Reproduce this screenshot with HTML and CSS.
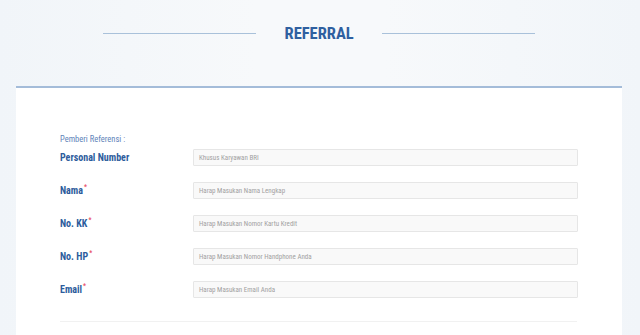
FILE: index.html
```html
<!DOCTYPE html>
<html lang="id">
<head>
<meta charset="utf-8">
<title>Referral</title>
<link rel="stylesheet" href="styles.css">
</head>
<body>
<div class="page">
  <header class="heading">
    <span class="rule"></span>
    <h1 class="title">REFERRAL</h1>
    <span class="rule"></span>
  </header>
  <section class="card">
    <p class="section-label">Pemberi Referensi :</p>
    <div class="row">
      <label class="label">Personal Number</label>
      <div class="input"><span class="ph">Khusus Karyawan BRI</span></div>
    </div>
    <div class="row">
      <label class="label">Nama<sup class="req">*</sup></label>
      <div class="input"><span class="ph">Harap Masukan Nama Lengkap</span></div>
    </div>
    <div class="row">
      <label class="label">No. KK<sup class="req">*</sup></label>
      <div class="input"><span class="ph">Harap Masukan Nomor Kartu Kredit</span></div>
    </div>
    <div class="row">
      <label class="label">No. HP<sup class="req">*</sup></label>
      <div class="input"><span class="ph">Harap Masukan Nomor Handphone Anda</span></div>
    </div>
    <div class="row">
      <label class="label">Email<sup class="req">*</sup></label>
      <div class="input"><span class="ph">Harap Masukan Email Anda</span></div>
    </div>
    <div class="divider"></div>
  </section>
</div>
</body>
</html>
```
FILE: styles.css
```css
html, body {
  margin: 0;
  padding: 0;
}
body {
  width: 640px;
  height: 335px;
  overflow: hidden;
  background: linear-gradient(90deg, #f1f5f9 0%, #f7f9fb 40%, #f7f9fb 60%, #f1f5f9 100%);
  font-family: "Roboto Condensed", "Liberation Sans Narrow", Roboto, sans-serif;
}
.page {
  display: flex;
  flex-direction: column;
  height: 335px;
}
.heading {
  display: flex;
  align-items: center;
  justify-content: center;
  gap: 29px;
  height: 66px;
  padding-right: 3px;
}
.rule {
  width: 153px;
  height: 1px;
  background: #a9c1da;
}
.title {
  margin: 0;
  font-size: 16.5px;
  font-weight: 700;
  color: #2f60a0;
  width: 68px;
  text-align: center;
}
.card {
  margin: 20px 18px 0 16px;
  flex: 1;
  background: #fff;
  border-top: 2px solid #a4bcd9;
  padding: 45px 44px 0 44px;
}
.section-label {
  margin: 0 0 6px;
  font-size: 8.5px;
  font-weight: 400;
  color: #5f84ba;
  line-height: 12px;
}
.row {
  display: flex;
  align-items: flex-start;
  height: 33px;
}
.label {
  width: 133px;
  font-size: 10px;
  font-weight: 700;
  color: #2d5c9c;
  line-height: 14px;
}
.req {
  color: #e8506a;
  font-size: 6.5px;
  vertical-align: top;
  line-height: 7px;
  margin-left: 1px;
}
.input {
  width: 378px;
  height: 15px;
  margin-top: -2px;
  background: #f9f9f9;
  border: 1px solid #e6e6e6;
  border-radius: 1px;
  display: flex;
  align-items: center;
  padding-left: 5px;
  box-sizing: content-box;
}
.ph {
  font-size: 7px;
  color: #a2a2a2;
}
.divider {
  margin-top: 5px;
  width: 517px;
  height: 1px;
  background: #f1f1f1;
}
```
